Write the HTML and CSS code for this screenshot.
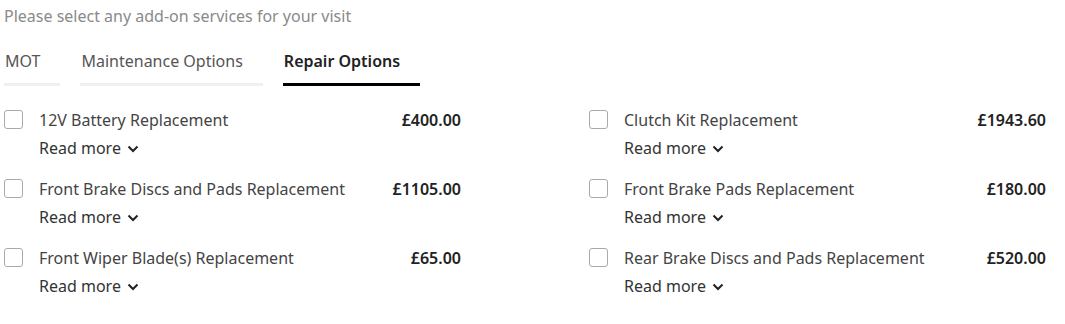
FILE: index.html
```html
<!DOCTYPE html>
<html lang="en">
<head>
    <meta charset="UTF-8">
    <title>Add-on Services</title>
    <link rel="stylesheet" href="styles.css">
</head>
<body>
    <div class="addons">
        <p class="intro">Please select any add-on services for your visit</p>

        <!-- Tabs -->
        <div class="tabs">
            <div class="tab">MOT</div>
            <div class="tab">Maintenance Options</div>
            <div class="tab active">Repair Options</div>
        </div>

        <!-- Repair options list -->
        <div class="options">
            <div class="option">
                <span class="check"></span>
                <div class="info">
                    <div class="name">12V Battery Replacement</div>
                    <div class="more">Read more <svg width="12" height="8" viewBox="0 0 12 8"><path d="M1.5 1.5 6 6 10.5 1.5" fill="none" stroke="#222" stroke-width="2"/></svg></div>
                </div>
                <div class="price">£400.00</div>
            </div>
            <div class="option">
                <span class="check"></span>
                <div class="info">
                    <div class="name">Clutch Kit Replacement</div>
                    <div class="more">Read more <svg width="12" height="8" viewBox="0 0 12 8"><path d="M1.5 1.5 6 6 10.5 1.5" fill="none" stroke="#222" stroke-width="2"/></svg></div>
                </div>
                <div class="price">£1943.60</div>
            </div>
            <div class="option">
                <span class="check"></span>
                <div class="info">
                    <div class="name">Front Brake Discs and Pads Replacement</div>
                    <div class="more">Read more <svg width="12" height="8" viewBox="0 0 12 8"><path d="M1.5 1.5 6 6 10.5 1.5" fill="none" stroke="#222" stroke-width="2"/></svg></div>
                </div>
                <div class="price">£1105.00</div>
            </div>
            <div class="option">
                <span class="check"></span>
                <div class="info">
                    <div class="name">Front Brake Pads Replacement</div>
                    <div class="more">Read more <svg width="12" height="8" viewBox="0 0 12 8"><path d="M1.5 1.5 6 6 10.5 1.5" fill="none" stroke="#222" stroke-width="2"/></svg></div>
                </div>
                <div class="price">£180.00</div>
            </div>
            <div class="option">
                <span class="check"></span>
                <div class="info">
                    <div class="name">Front Wiper Blade(s) Replacement</div>
                    <div class="more">Read more <svg width="12" height="8" viewBox="0 0 12 8"><path d="M1.5 1.5 6 6 10.5 1.5" fill="none" stroke="#222" stroke-width="2"/></svg></div>
                </div>
                <div class="price">£65.00</div>
            </div>
            <div class="option">
                <span class="check"></span>
                <div class="info">
                    <div class="name">Rear Brake Discs and Pads Replacement</div>
                    <div class="more">Read more <svg width="12" height="8" viewBox="0 0 12 8"><path d="M1.5 1.5 6 6 10.5 1.5" fill="none" stroke="#222" stroke-width="2"/></svg></div>
                </div>
                <div class="price">£520.00</div>
            </div>
        </div>
    </div>
</body>
</html>
```

FILE: styles.css
```css
body {
    margin: 0;
    font-family: "Noto Sans", Arial, sans-serif;
    color: #333;
    background: #fff;
}
.addons {
    padding: 0 4px;
}
.intro {
    margin: 0;
    padding-top: 5px;
    font-size: 16px;
    line-height: 22px;
    color: #8a8a8a;
}
.tabs {
    display: flex;
    gap: 20px;
    margin-top: 23px;
}
.tab {
    font-size: 16px;
    line-height: 22px;
    padding: 0 20px 11px 1px;
    border-bottom: 3px solid #f0f0f0;
    color: #555;
}
.active {
    font-weight: 600;
    color: #222;
    border-bottom-color: #000;
}
.options {
    display: grid;
    grid-template-columns: 457px 457px;
    column-gap: 128px;
    row-gap: 19px;
    margin-top: 23px;
}
.option {
    display: flex;
    align-items: flex-start;
}
.check {
    width: 17px;
    height: 17px;
    border: 1px solid #aaa;
    border-radius: 3px;
    flex-shrink: 0;
    margin-top: 1px;
}
.info {
    flex: 1;
    margin-left: 16px;
    font-size: 16px;
    line-height: 22px;
}
.name {
    color: #444;
}
.more {
    margin-top: 6px;
    color: #333;
}
.more svg {
    margin-left: 2px;
    vertical-align: 1px;
}
.price {
    font-size: 16px;
    line-height: 22px;
    font-weight: 600;
    color: #222;
}
```
